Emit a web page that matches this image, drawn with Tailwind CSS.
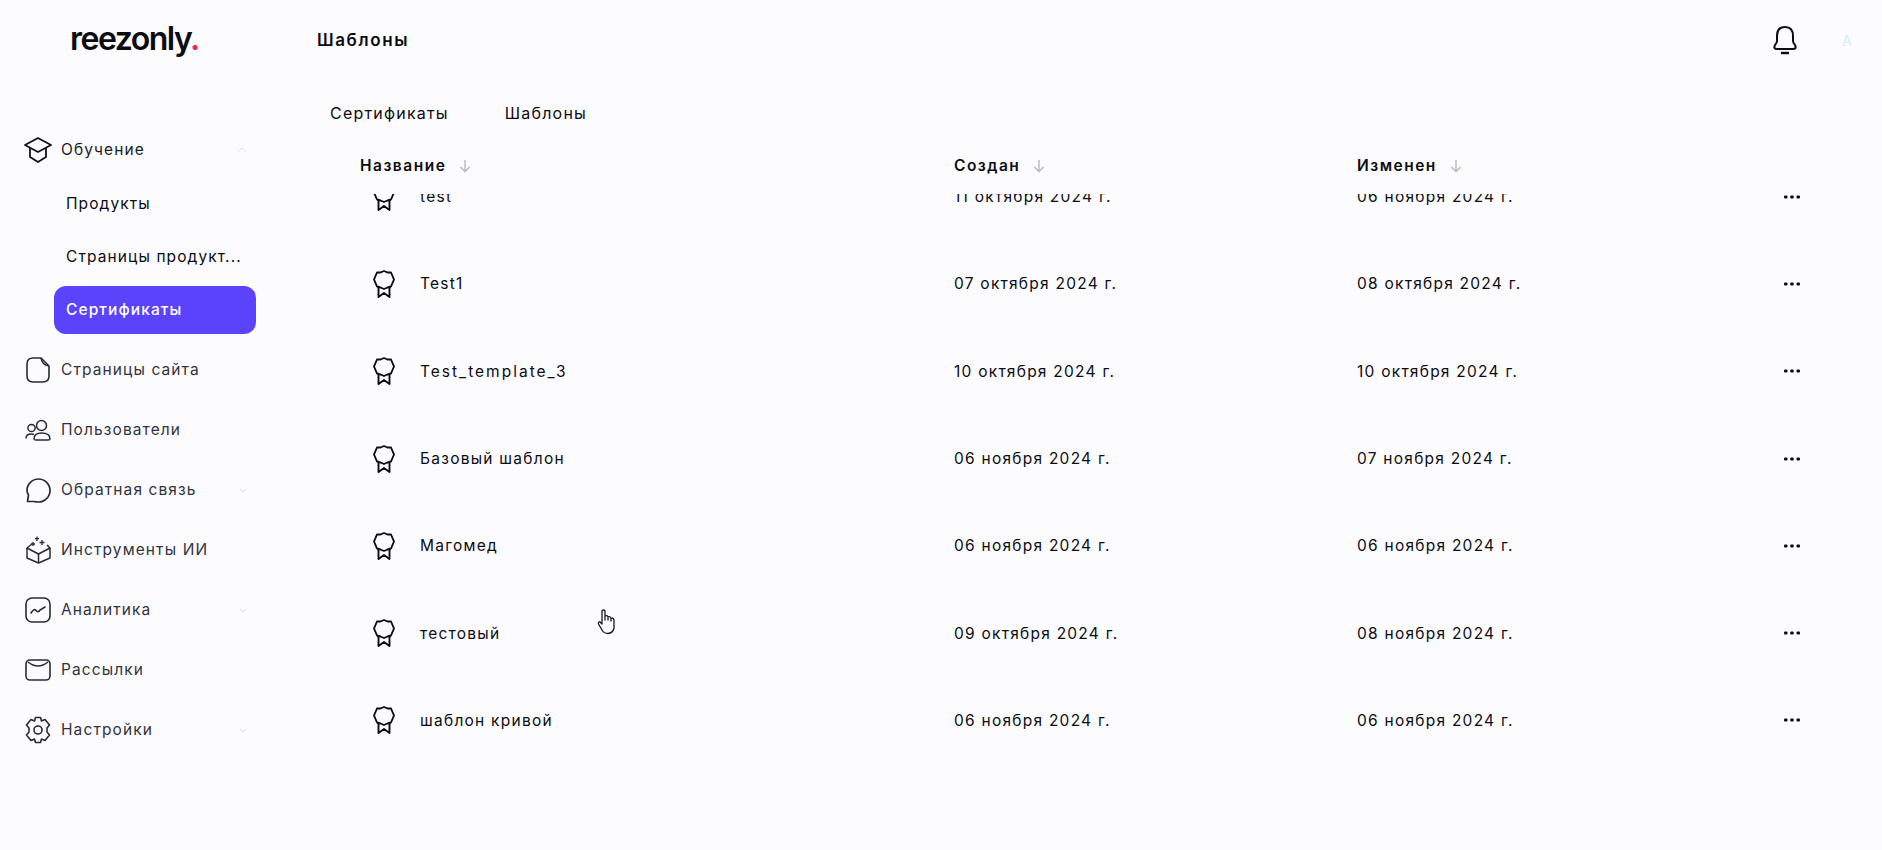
<!DOCTYPE html>
<html lang="ru">
<head>
    <meta charset="UTF-8">
    <title>Шаблоны</title>
    <script src="https://cdn.jsdelivr.net/npm/@tailwindcss/browser@4"></script>
</head>
<body class="bg-[#fcfcff] font-['Inter',sans-serif] text-[#0b0b12] h-[850px] overflow-hidden">
<div class="relative flex h-[850px]">
    <!-- Sidebar -->
    <aside class="w-[300px] shrink-0">
        <div class="h-[120px] pl-[70px] pt-[16px] text-[32px] leading-[46px] font-semibold tracking-[-1.5px] text-[#0c0c10]">reezonly<span class="text-[#f0244f]">.</span></div>
        <nav class="text-[15.5px] tracking-[1.1px] text-[#33333d]">
            <div class="flex items-center w-[247px] h-[60px] pl-[23px]">
                <svg class="w-[30px] h-[28px] shrink-0" viewBox="0 0 30 28" fill="none" stroke="#111" stroke-width="1.8" stroke-linejoin="round"><path d="M15 2 L28 9 L15 16 L2 9 Z"/><path d="M7 12 V21 L15 26 L23 21 V12"/></svg>
                <span class="ml-[8px] text-[#1a1a22]">Обучение</span>
                <svg class="w-[10px] h-[6px] ml-auto" viewBox="0 0 10 6" fill="none" stroke="#dcdcea" stroke-width="1"><path d="M1 5 L5 1 L9 5"/></svg>
            </div>
            <div class="flex items-center h-[44px] pl-[66px] mt-[2px] text-[#0b0b12]">Продукты</div>
            <div class="flex items-center h-[52px] mt-[5px] pl-[66px] w-[246px] text-[#0b0b12]"><span class="truncate">Страницы продукт...</span></div>
            <div class="flex items-center ml-[54px] w-[202px] h-[48px] mt-[3px] pl-[12px] rounded-[12px] bg-[#5b43fb] text-white font-medium">Сертификаты</div>
            <div class="flex items-center w-[247px] h-[60px] mt-[6px] pl-[25px]">
                <svg class="w-[26px] h-[28px] shrink-0" viewBox="0 0 26 28" fill="none" stroke="#2a2a33" stroke-width="1.6"><path d="M8 2 H16 L24 10 V20 Q24 26 18 26 H8 Q2 26 2 20 V8 Q2 2 8 2 Z"/><path d="M16 2 Q17 9 24 10"/></svg>
                <span class="ml-[10px]">Страницы сайта</span>
            </div>
            <div class="flex items-center w-[247px] h-[60px] pl-[25px]">
                <svg class="w-[26px] h-[22px] shrink-0" viewBox="0 0 26 22" fill="none" stroke="#2a2a33" stroke-width="1.5"><circle cx="6.5" cy="9" r="3.6"/><path d="M1 19.5 Q1 15 6 15 Q8 15 9 15.5"/><circle cx="16.5" cy="6.5" r="5"/><path d="M9 20 Q9 14 16.5 14 Q25 14 25 20 Q25 21 23 21 H11 Q9 21 9 20 Z"/></svg>
                <span class="ml-[10px]">Пользователи</span>
            </div>
            <div class="flex items-center w-[247px] h-[60px] pl-[26px]">
                <svg class="w-[25px] h-[25px] shrink-0" viewBox="0 0 25 25" fill="none" stroke="#2a2a33" stroke-width="1.7"><path d="M1.5 23.5 L2.5 17 Q1 14.5 1 12.5 A11.5 11.5 0 1 1 12.5 24 Q10 24 8 23.5 Z" stroke-linejoin="round"/></svg>
                <span class="ml-[10px]">Обратная связь</span>
                <svg class="w-[8px] h-[5px] ml-auto" viewBox="0 0 8 5" fill="none" stroke="#dcdcea" stroke-width="1"><path d="M1 1 L4 4 L7 1"/></svg>
            </div>
            <div class="flex items-center w-[247px] h-[60px] pl-[26px]">
                <svg class="w-[25px] h-[28px] shrink-0" viewBox="0 0 25 28" fill="none" stroke="#2a2a33" stroke-width="1.5" stroke-linejoin="round"><path d="M6 8 L1 12 L12.5 18 L24 12 L21 9"/><path d="M1 12 V22 L12.5 27 L24 22 V12"/><path d="M12.5 18 V27"/><path d="M11 0.5 V5 M9 2.7 H13 M7 6 V10 M5 8 H9 M16 4 V9 M13.5 6.5 H18.5" stroke-width="1.3"/></svg>
                <span class="ml-[10px]">Инструменты ИИ</span>
            </div>
            <div class="flex items-center w-[247px] h-[60px] pl-[25px]">
                <svg class="w-[26px] h-[26px] shrink-0" viewBox="0 0 26 26" fill="none" stroke="#2a2a33" stroke-width="1.6"><rect x="1" y="1" width="24" height="24" rx="6"/><path d="M6 16 Q9 11 11 13.5 T15 13 L20 10" stroke-linecap="round"/></svg>
                <span class="ml-[10px]">Аналитика</span>
                <svg class="w-[8px] h-[5px] ml-auto" viewBox="0 0 8 5" fill="none" stroke="#dcdcea" stroke-width="1"><path d="M1 1 L4 4 L7 1"/></svg>
            </div>
            <div class="flex items-center w-[247px] h-[60px] pl-[25px]">
                <svg class="w-[26px] h-[22px] shrink-0" viewBox="0 0 26 22" fill="none" stroke="#2a2a33" stroke-width="1.6"><rect x="1" y="1" width="24" height="20" rx="4"/><path d="M3 3 Q13 11 23 3"/></svg>
                <span class="ml-[10px]">Рассылки</span>
            </div>
            <div class="flex items-center w-[247px] h-[60px] pl-[25px]">
                <svg class="w-[26px] h-[28px] shrink-0" viewBox="0 0 26 28" fill="none" stroke="#2a2a33" stroke-width="1.6" stroke-linejoin="round"><circle cx="13" cy="14" r="4"/><path d="M10.5 1.5 H15.5 L16.5 5 L20 3.5 L24.5 9 L22 12 V16 L24.5 19 L20 24.5 L16.5 23 L15.5 26.5 H10.5 L9.5 23 L6 24.5 L1.5 19 L4 16 V12 L1.5 9 L6 3.5 L9.5 5 Z"/></svg>
                <span class="ml-[10px]">Настройки</span>
                <svg class="w-[8px] h-[5px] ml-auto" viewBox="0 0 8 5" fill="none" stroke="#dcdcea" stroke-width="1"><path d="M1 1 L4 4 L7 1"/></svg>
            </div>
        </nav>
    </aside>

    <!-- Main -->
    <main class="flex-1 min-w-0">
        <header class="flex items-center justify-between h-[82px] pl-[17px]">
            <h1 class="text-[17px] font-semibold tracking-[1.6px]">Шаблоны</h1>
            <div class="flex items-center pr-[26px] -mt-[2px]">
                <svg class="w-[26px] h-[30px]" viewBox="0 0 26 30" fill="none" stroke="#0b0b12" stroke-width="2"><path d="M13 2 Q5 2 5 11 V16 Q5 18 3 20 Q1 24 5 24 H21 Q25 24 23 20 Q21 18 21 16 V11 Q21 2 13 2 Z"/><path d="M9 28 H17" stroke-width="2.4"/></svg>
                <span class="ml-[44px] w-[14px] text-[14px] text-[#dbeafe]">А</span>
            </div>
        </header>
        <div class="flex h-[62px] items-center pl-[30px] text-[16px] tracking-[1.2px]">
            <span>Сертификаты</span>
            <span class="ml-[56px]">Шаблоны</span>
        </div>
        <div class="grid grid-cols-[594px_403px_1fr] h-[44px] items-center pl-[60px] text-[15.5px] font-semibold tracking-[1.5px]">
            <div class="flex items-center gap-[13px]">Название <svg class="w-[12px] h-[14px]" viewBox="0 0 12 14" fill="none" stroke="#b4b4c4" stroke-width="1.3"><path d="M6 1 V12 M1.5 8 L6 12.5 L10.5 8"/></svg></div>
            <div class="flex items-center gap-[13px]">Создан <svg class="w-[12px] h-[14px]" viewBox="0 0 12 14" fill="none" stroke="#b4b4c4" stroke-width="1.3"><path d="M6 1 V12 M1.5 8 L6 12.5 L10.5 8"/></svg></div>
            <div class="flex items-center gap-[13px]">Изменен <svg class="w-[12px] h-[14px]" viewBox="0 0 12 14" fill="none" stroke="#b4b4c4" stroke-width="1.3"><path d="M6 1 V12 M1.5 8 L6 12.5 L10.5 8"/></svg></div>
        </div>
        <!-- строки таблицы, прокручены -->
        <div id="rows" class="h-[640px] mt-[6px] overflow-hidden text-[15.5px] tracking-[1.25px]">
            <div class="-mt-[41px]">
                <div class="grid grid-cols-[581px_403px_1fr_auto] h-[87.3px] items-center pl-[73px] pr-[82px]">
                    <div class="flex items-center gap-[25px]"><svg class="w-[22px] h-[28px]" viewBox="0 0 22 28" fill="none" stroke="#0b0b12" stroke-width="1.9" stroke-linejoin="round"><path d="M11 1 L14.5 2.5 L18 2.5 L19.5 6 L21 9.5 L19.5 13 L18 16.5 L14.5 17.5 L11 19 L7.5 17.5 L4 16.5 L2.5 13 L1 9.5 L2.5 6 L4 2.5 L7.5 2.5 Z"/><path d="M5.5 17 V27 L11 23 L16.5 27 V17"/></svg><span>test</span></div>
                    <div>11 октября 2024 г.</div><div>06 ноября 2024 г.</div>
                    <svg class="w-[16px] h-[4px]" viewBox="0 0 16 4" fill="#0b0b12"><rect y="0.5" width="3.5" height="3" rx="1"/><rect x="6.2" y="0.5" width="3.5" height="3" rx="1"/><rect x="12.5" y="0.5" width="3.5" height="3" rx="1"/></svg>
                </div>
                <div class="grid grid-cols-[581px_403px_1fr_auto] h-[87.3px] items-center pl-[73px] pr-[82px]">
                    <div class="flex items-center gap-[25px]"><svg class="w-[22px] h-[28px]" viewBox="0 0 22 28" fill="none" stroke="#0b0b12" stroke-width="1.9" stroke-linejoin="round"><path d="M11 1 L14.5 2.5 L18 2.5 L19.5 6 L21 9.5 L19.5 13 L18 16.5 L14.5 17.5 L11 19 L7.5 17.5 L4 16.5 L2.5 13 L1 9.5 L2.5 6 L4 2.5 L7.5 2.5 Z"/><path d="M5.5 17 V27 L11 23 L16.5 27 V17"/></svg><span>Test1</span></div>
                    <div>07 октября 2024 г.</div><div>08 октября 2024 г.</div>
                    <svg class="w-[16px] h-[4px]" viewBox="0 0 16 4" fill="#0b0b12"><rect y="0.5" width="3.5" height="3" rx="1"/><rect x="6.2" y="0.5" width="3.5" height="3" rx="1"/><rect x="12.5" y="0.5" width="3.5" height="3" rx="1"/></svg>
                </div>
                <div class="grid grid-cols-[581px_403px_1fr_auto] h-[87.3px] items-center pl-[73px] pr-[82px]">
                    <div class="flex items-center gap-[25px]"><svg class="w-[22px] h-[28px]" viewBox="0 0 22 28" fill="none" stroke="#0b0b12" stroke-width="1.9" stroke-linejoin="round"><path d="M11 1 L14.5 2.5 L18 2.5 L19.5 6 L21 9.5 L19.5 13 L18 16.5 L14.5 17.5 L11 19 L7.5 17.5 L4 16.5 L2.5 13 L1 9.5 L2.5 6 L4 2.5 L7.5 2.5 Z"/><path d="M5.5 17 V27 L11 23 L16.5 27 V17"/></svg><span class="tracking-[2px]">Test_template_3</span></div>
                    <div>10 октября 2024 г.</div><div>10 октября 2024 г.</div>
                    <svg class="w-[16px] h-[4px]" viewBox="0 0 16 4" fill="#0b0b12"><rect y="0.5" width="3.5" height="3" rx="1"/><rect x="6.2" y="0.5" width="3.5" height="3" rx="1"/><rect x="12.5" y="0.5" width="3.5" height="3" rx="1"/></svg>
                </div>
                <div class="grid grid-cols-[581px_403px_1fr_auto] h-[87.3px] items-center pl-[73px] pr-[82px]">
                    <div class="flex items-center gap-[25px]"><svg class="w-[22px] h-[28px]" viewBox="0 0 22 28" fill="none" stroke="#0b0b12" stroke-width="1.9" stroke-linejoin="round"><path d="M11 1 L14.5 2.5 L18 2.5 L19.5 6 L21 9.5 L19.5 13 L18 16.5 L14.5 17.5 L11 19 L7.5 17.5 L4 16.5 L2.5 13 L1 9.5 L2.5 6 L4 2.5 L7.5 2.5 Z"/><path d="M5.5 17 V27 L11 23 L16.5 27 V17"/></svg><span>Базовый шаблон</span></div>
                    <div>06 ноября 2024 г.</div><div>07 ноября 2024 г.</div>
                    <svg class="w-[16px] h-[4px]" viewBox="0 0 16 4" fill="#0b0b12"><rect y="0.5" width="3.5" height="3" rx="1"/><rect x="6.2" y="0.5" width="3.5" height="3" rx="1"/><rect x="12.5" y="0.5" width="3.5" height="3" rx="1"/></svg>
                </div>
                <div class="grid grid-cols-[581px_403px_1fr_auto] h-[87.3px] items-center pl-[73px] pr-[82px]">
                    <div class="flex items-center gap-[25px]"><svg class="w-[22px] h-[28px]" viewBox="0 0 22 28" fill="none" stroke="#0b0b12" stroke-width="1.9" stroke-linejoin="round"><path d="M11 1 L14.5 2.5 L18 2.5 L19.5 6 L21 9.5 L19.5 13 L18 16.5 L14.5 17.5 L11 19 L7.5 17.5 L4 16.5 L2.5 13 L1 9.5 L2.5 6 L4 2.5 L7.5 2.5 Z"/><path d="M5.5 17 V27 L11 23 L16.5 27 V17"/></svg><span>Магомед</span></div>
                    <div>06 ноября 2024 г.</div><div>06 ноября 2024 г.</div>
                    <svg class="w-[16px] h-[4px]" viewBox="0 0 16 4" fill="#0b0b12"><rect y="0.5" width="3.5" height="3" rx="1"/><rect x="6.2" y="0.5" width="3.5" height="3" rx="1"/><rect x="12.5" y="0.5" width="3.5" height="3" rx="1"/></svg>
                </div>
                <div class="grid grid-cols-[581px_403px_1fr_auto] h-[87.3px] items-center pl-[73px] pr-[82px]">
                    <div class="flex items-center gap-[25px]"><svg class="w-[22px] h-[28px]" viewBox="0 0 22 28" fill="none" stroke="#0b0b12" stroke-width="1.9" stroke-linejoin="round"><path d="M11 1 L14.5 2.5 L18 2.5 L19.5 6 L21 9.5 L19.5 13 L18 16.5 L14.5 17.5 L11 19 L7.5 17.5 L4 16.5 L2.5 13 L1 9.5 L2.5 6 L4 2.5 L7.5 2.5 Z"/><path d="M5.5 17 V27 L11 23 L16.5 27 V17"/></svg><span>тестовый</span></div>
                    <div>09 октября 2024 г.</div><div>08 ноября 2024 г.</div>
                    <svg class="w-[16px] h-[4px]" viewBox="0 0 16 4" fill="#0b0b12"><rect y="0.5" width="3.5" height="3" rx="1"/><rect x="6.2" y="0.5" width="3.5" height="3" rx="1"/><rect x="12.5" y="0.5" width="3.5" height="3" rx="1"/></svg>
                </div>
                <div class="grid grid-cols-[581px_403px_1fr_auto] h-[87.3px] items-center pl-[73px] pr-[82px]">
                    <div class="flex items-center gap-[25px]"><svg class="w-[22px] h-[28px]" viewBox="0 0 22 28" fill="none" stroke="#0b0b12" stroke-width="1.9" stroke-linejoin="round"><path d="M11 1 L14.5 2.5 L18 2.5 L19.5 6 L21 9.5 L19.5 13 L18 16.5 L14.5 17.5 L11 19 L7.5 17.5 L4 16.5 L2.5 13 L1 9.5 L2.5 6 L4 2.5 L7.5 2.5 Z"/><path d="M5.5 17 V27 L11 23 L16.5 27 V17"/></svg><span>шаблон кривой</span></div>
                    <div>06 ноября 2024 г.</div><div>06 ноября 2024 г.</div>
                    <svg class="w-[16px] h-[4px]" viewBox="0 0 16 4" fill="#0b0b12"><rect y="0.5" width="3.5" height="3" rx="1"/><rect x="6.2" y="0.5" width="3.5" height="3" rx="1"/><rect x="12.5" y="0.5" width="3.5" height="3" rx="1"/></svg>
                </div>
            </div>
        </div>
    </main>

    <!-- курсор поверх контента -->
    <svg class="absolute left-[597px] top-[609px] w-[20px] h-[26px]" viewBox="0 0 20 26" fill="#fff" stroke="#16161e" stroke-width="1.3" stroke-linejoin="round"><path d="M5 2 Q5 1 6.5 1 Q8 1 8 2 V11 V7 Q10 6 11 7.5 V11 V8 Q13 7 14 9 V12 V9.5 Q16.5 8.5 17 11 V19 Q16 24 11 24.5 Q7 24.5 5 21 L1.5 15 Q1 12.5 3 13 L5 15 Z"/></svg>
</div>
</body>
</html>
